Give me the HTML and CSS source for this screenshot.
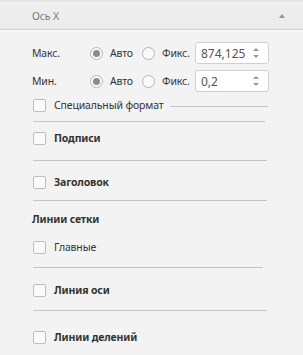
FILE: index.html
```html
<!DOCTYPE html>
<html lang="ru">
<head>
    <meta charset="UTF-8">
    <title>Ось X</title>
    <link rel="stylesheet" href="styles.css">
</head>
<body>
    <div class="panel-header">
        <span class="panel-title">Ось X</span>
        <span class="collapse-arrow"></span>
    </div>

    <div class="panel-body">
        <div class="range-row">
            <span class="range-label">Макс.</span>
            <label class="radio"><span class="radio-dot checked"></span>Авто</label>
            <label class="radio"><span class="radio-dot"></span>Фикс.</label>
            <div class="spin-input">
                <span class="spin-value">874,125</span>
                <span class="spin-arrows"><i class="up"></i><i class="down"></i></span>
            </div>
        </div>
        <div class="range-row second">
            <span class="range-label">Мин.</span>
            <label class="radio"><span class="radio-dot checked"></span>Авто</label>
            <label class="radio"><span class="radio-dot"></span>Фикс.</label>
            <div class="spin-input">
                <span class="spin-value">0,2</span>
                <span class="spin-arrows"><i class="up"></i><i class="down"></i></span>
            </div>
        </div>

        <label class="check special"><span class="box"></span>Специальный формат<span class="fill-line"></span></label>
        <div class="sep sep-1"></div>

        <label class="check bold row-labels"><span class="box"></span>Подписи</label>
        <div class="sep sep-2"></div>

        <label class="check bold row-title"><span class="box"></span>Заголовок</label>
        <div class="sep sep-3"></div>

        <div class="group-title">Линии сетки</div>
        <label class="check row-major"><span class="box"></span>Главные</label>
        <div class="sep sep-4"></div>

        <label class="check bold row-axis"><span class="box"></span>Линия оси</label>
        <div class="sep sep-5"></div>

        <label class="check bold row-ticks"><span class="box"></span>Линии делений</label>
    </div>
</body>
</html>
```

FILE: styles.css
```css
body {
    margin: 0;
    background: #f3f3f3;
    color: #333;
    font-family: "Noto Sans", Tahoma, sans-serif;
    font-size: 10.5px;
    letter-spacing: -0.15px;
}

.panel-header {
    height: 27px;
    display: flex;
    align-items: center;
    justify-content: space-between;
    padding: 0 14px 0 32px;
    border-top: 2px solid #e4e4e4;
    border-bottom: 1px solid #d2d2d2;
    background: linear-gradient(#efefef, #ebebeb);
}

.panel-title {
    color: #7a7a7a;
}

.collapse-arrow {
    width: 0;
    height: 0;
    border-left: 3px solid transparent;
    border-right: 3px solid transparent;
    border-bottom: 4px solid #999;
    margin-right: 4px;
}

.panel-body {
    padding: 12px 35px 0 32px;
    border-top: 2px solid #f7f7f7;
}

.range-row {
    display: flex;
    align-items: center;
    height: 22px;
    margin-top: -2px;
}

.range-row.second {
    margin-top: 6px;
}

.range-label {
    flex: 0 0 58px;
}

.radio {
    flex: 0 0 52px;
    display: flex;
    align-items: center;
}

.radio + .radio {
    flex-basis: 53px;
}

.radio-dot {
    width: 11px;
    height: 11px;
    border: 1px solid #b4b4b4;
    border-radius: 50%;
    background: #fafafa;
    margin-right: 7px;
    display: flex;
    align-items: center;
    justify-content: center;
}

.radio-dot.checked::after {
    content: "";
    width: 7px;
    height: 7px;
    border-radius: 50%;
    background: #8c8c8c;
}

.spin-input {
    flex: 0 0 auto;
    width: 58px;
    height: 20px;
    border: 1px solid #d0d0d0;
    border-radius: 3px;
    background: #fff;
    display: flex;
    align-items: center;
    justify-content: space-between;
    padding: 0 9px 0 5px;
    color: #555;
    font-size: 12px;
    letter-spacing: 0;
}

.spin-arrows {
    display: flex;
    flex-direction: column;
    gap: 4px;
}

.spin-arrows i {
    width: 0;
    height: 0;
    border-left: 3px solid transparent;
    border-right: 3px solid transparent;
}

.spin-arrows .up { border-bottom: 3px solid #999; }
.spin-arrows .down { border-top: 3px solid #999; }

.check {
    display: flex;
    align-items: center;
    height: 16px;
}

.check .box {
    width: 11px;
    height: 11px;
    border: 1px solid #bdbdbd;
    border-radius: 2px;
    background: #fafafa;
    margin: 0 8px 0 1px;
}

.check.bold,
.group-title {
    font-weight: bold;
}

.fill-line {
    flex: 1;
    height: 1px;
    background: #c4c4c4;
    margin: 3px 0 0 6px;
}

.sep {
    height: 1px;
    background: #c4c4c4;
    margin-left: 1px;
}

.group-title {
    height: 16px;
    line-height: 16px;
    margin-top: 10px;
}

.special { margin-top: 5px; }
.sep-1 { margin-top: 8px; margin-right: 3px; }
.row-labels { margin-top: 8px; }
.sep-2 { margin-top: 14px; margin-right: 1px; }
.row-title { margin-top: 13px; }
.sep-3 { margin-top: 10px; margin-right: 1px; }
.row-major { margin-top: 12px; }
.sep-4 { margin-top: 12px; margin-right: 5px; }
.row-axis { margin-top: 14px; }
.sep-5 { margin-top: 12px; margin-right: 1px; }
.row-ticks { margin-top: 18px; }
```
